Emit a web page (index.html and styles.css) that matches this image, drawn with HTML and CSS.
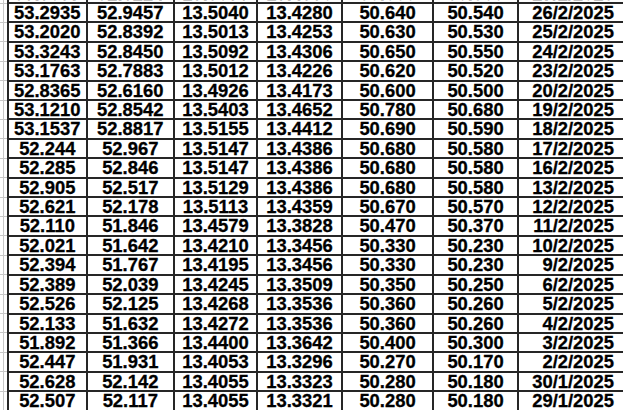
FILE: index.html
```html
<!DOCTYPE html>
<html>
<head>
<meta charset="utf-8">
<link rel="stylesheet" href="styles.css">
</head>
<body>
<table class="rates">
<colgroup>
<col class="c-gap1"><col class="c-gap2">
<col class="c1"><col class="c2"><col class="c3"><col class="c4"><col class="c5"><col class="c6"><col class="c7">
</colgroup>
<tbody>
<tr><td class="g1"></td><td class="g2"></td><td>53.3037</td><td>52.9224</td><td>13.5089</td><td>13.4330</td><td>50.660</td><td>50.560</td><td class="d">27/2/2025</td></tr>
<tr><td class="g1"></td><td class="g2"></td><td>53.2935</td><td>52.9457</td><td>13.5040</td><td>13.4280</td><td>50.640</td><td>50.540</td><td class="d">26/2/2025</td></tr>
<tr><td class="g1"></td><td class="g2"></td><td>53.2020</td><td>52.8392</td><td>13.5013</td><td>13.4253</td><td>50.630</td><td>50.530</td><td class="d">25/2/2025</td></tr>
<tr><td class="g1"></td><td class="g2"></td><td>53.3243</td><td>52.8450</td><td>13.5092</td><td>13.4306</td><td>50.650</td><td>50.550</td><td class="d">24/2/2025</td></tr>
<tr><td class="g1"></td><td class="g2"></td><td>53.1763</td><td>52.7883</td><td>13.5012</td><td>13.4226</td><td>50.620</td><td>50.520</td><td class="d">23/2/2025</td></tr>
<tr><td class="g1"></td><td class="g2"></td><td>52.8365</td><td>52.6160</td><td>13.4926</td><td>13.4173</td><td>50.600</td><td>50.500</td><td class="d">20/2/2025</td></tr>
<tr><td class="g1"></td><td class="g2"></td><td>53.1210</td><td>52.8542</td><td>13.5403</td><td>13.4652</td><td>50.780</td><td>50.680</td><td class="d">19/2/2025</td></tr>
<tr><td class="g1"></td><td class="g2"></td><td>53.1537</td><td>52.8817</td><td>13.5155</td><td>13.4412</td><td>50.690</td><td>50.590</td><td class="d">18/2/2025</td></tr>
<tr><td class="g1"></td><td class="g2"></td><td>52.244</td><td>52.967</td><td>13.5147</td><td>13.4386</td><td>50.680</td><td>50.580</td><td class="d">17/2/2025</td></tr>
<tr><td class="g1"></td><td class="g2"></td><td>52.285</td><td>52.846</td><td>13.5147</td><td>13.4386</td><td>50.680</td><td>50.580</td><td class="d">16/2/2025</td></tr>
<tr><td class="g1"></td><td class="g2"></td><td>52.905</td><td>52.517</td><td>13.5129</td><td>13.4386</td><td>50.680</td><td>50.580</td><td class="d">13/2/2025</td></tr>
<tr><td class="g1"></td><td class="g2"></td><td>52.621</td><td>52.178</td><td>13.5113</td><td>13.4359</td><td>50.670</td><td>50.570</td><td class="d">12/2/2025</td></tr>
<tr><td class="g1"></td><td class="g2"></td><td>52.110</td><td>51.846</td><td>13.4579</td><td>13.3828</td><td>50.470</td><td>50.370</td><td class="d">11/2/2025</td></tr>
<tr><td class="g1"></td><td class="g2"></td><td>52.021</td><td>51.642</td><td>13.4210</td><td>13.3456</td><td>50.330</td><td>50.230</td><td class="d">10/2/2025</td></tr>
<tr><td class="g1"></td><td class="g2"></td><td>52.394</td><td>51.767</td><td>13.4195</td><td>13.3456</td><td>50.330</td><td>50.230</td><td class="d">9/2/2025</td></tr>
<tr><td class="g1"></td><td class="g2"></td><td>52.389</td><td>52.039</td><td>13.4245</td><td>13.3509</td><td>50.350</td><td>50.250</td><td class="d">6/2/2025</td></tr>
<tr><td class="g1"></td><td class="g2"></td><td>52.526</td><td>52.125</td><td>13.4268</td><td>13.3536</td><td>50.360</td><td>50.260</td><td class="d">5/2/2025</td></tr>
<tr><td class="g1"></td><td class="g2"></td><td>52.133</td><td>51.632</td><td>13.4272</td><td>13.3536</td><td>50.360</td><td>50.260</td><td class="d">4/2/2025</td></tr>
<tr><td class="g1"></td><td class="g2"></td><td>51.892</td><td>51.366</td><td>13.4400</td><td>13.3642</td><td>50.400</td><td>50.300</td><td class="d">3/2/2025</td></tr>
<tr><td class="g1"></td><td class="g2"></td><td>52.447</td><td>51.931</td><td>13.4053</td><td>13.3296</td><td>50.270</td><td>50.170</td><td class="d">2/2/2025</td></tr>
<tr><td class="g1"></td><td class="g2"></td><td>52.628</td><td>52.142</td><td>13.4055</td><td>13.3323</td><td>50.280</td><td>50.180</td><td class="d">30/1/2025</td></tr>
<tr><td class="g1"></td><td class="g2"></td><td>52.507</td><td>52.117</td><td>13.4055</td><td>13.3321</td><td>50.280</td><td>50.180</td><td class="d">29/1/2025</td></tr>
</tbody>
</table>
</body>
</html>
```

FILE: styles.css
```css
html, body {
  margin: 0;
  padding: 0;
  background: #ffffff;
  overflow: hidden;
}

.rates {
  border-collapse: collapse;
  table-layout: fixed;
  width: 626px;
  margin-top: -17.4px;
  font-family: "Liberation Sans", Arial, sans-serif;
  font-weight: bold;
  font-size: 18.4px;
  color: #000;
  -webkit-text-stroke: 0.3px #000;
}

.c-gap1 { width: 3px; }
.c-gap2 { width: 5px; }
.c1 { width: 78.5px; }
.c2 { width: 87.5px; }
.c3 { width: 83px; }
.c4 { width: 85px; }
.c5 { width: 91px; }
.c6 { width: 85px; }
.c7 { width: 108px; }

.rates td {
  border: 2px solid #262626;
  padding: 1px 0 0 0;
  height: 16.4px;
  line-height: 16.4px;
  text-align: center;
  white-space: nowrap;
  overflow: hidden;
}

.rates td.d {
  text-align: right;
  padding-right: 11px;
}

.rates td.g1,
.rates td.g2 {
  border-top: 1px solid #c8c8c8;
  border-bottom: 1px solid #c8c8c8;
  border-right: none;
  border-left: none;
}

.rates td.g2 {
  border-left: 1px solid #c8c8c8;
}
```
